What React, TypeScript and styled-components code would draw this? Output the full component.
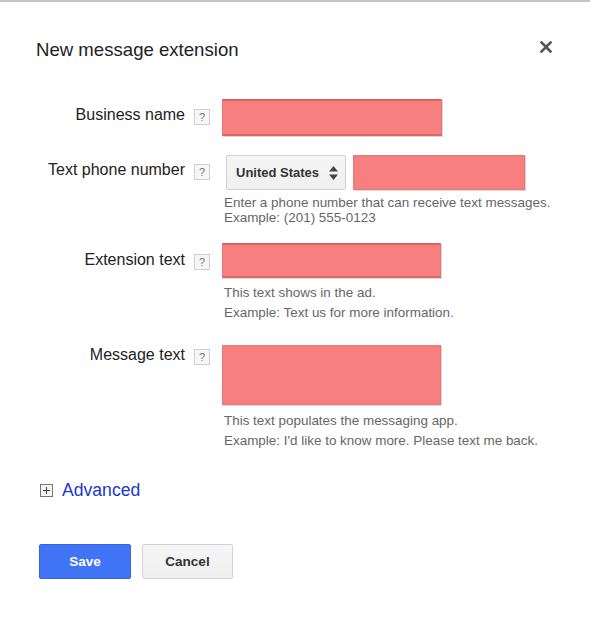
import React from "react";
import styled, { createGlobalStyle } from "styled-components";

const GlobalStyle = createGlobalStyle`
  html, body { margin: 0; padding: 0; background: #fff; }
  body { font-family: "Liberation Sans", Arial, sans-serif; color: #222; }
`;

const Dialog = styled.div`
  width: 590px;
  height: 617px;
  box-sizing: border-box;
  border-top: 2px solid #c4c4c4;
  background: #fff;
`;

const Header = styled.div`
  display: flex;
  justify-content: space-between;
  align-items: center;
  padding: 37px 37px 0 36px;
  height: 22px;
`;

const Title = styled.h1`
  margin: 0;
  font-size: 18.6px;
  font-weight: normal;
  line-height: 22px;
  color: #222;
`;

const CloseButton = styled.button`
  border: 0;
  background: none;
  padding: 0;
  width: 14px;
  height: 14px;
  display: flex;
  align-items: center;
  justify-content: center;
  cursor: pointer;
  margin-top: -6px;
`;

const Form = styled.div`
  margin-top: 38px;
  display: flex;
  flex-direction: column;
`;

const Row = styled.div<{ $gap: number }>`
  display: flex;
  align-items: flex-start;
  margin-top: ${(p) => p.$gap}px;
`;

const LabelCell = styled.div<{ $offset: number }>`
  flex: none;
  width: 222px;
  display: flex;
  align-items: flex-start;
  justify-content: flex-end;
  padding-top: ${(p) => p.$offset}px;
  padding-right: 12px;
  box-sizing: border-box;
`;

const Label = styled.label`
  font-size: 16px;
  line-height: 18px;
  color: #222;
  white-space: nowrap;
`;

const Help = styled.span`
  margin-left: 9px;
  margin-top: 3px;
  width: 14px;
  height: 14px;
  border: 1px solid #cfcfcf;
  background: #f7f7f7;
  color: #777;
  font-size: 11px;
  line-height: 14px;
  text-align: center;
  flex: none;
`;

const FieldCol = styled.div`
  display: flex;
  flex-direction: column;
`;

const TextBox = styled.div<{ $w: number; $h: number; $edge?: boolean }>`
  width: ${(p) => p.$w}px;
  height: ${(p) => p.$h}px;
  box-sizing: border-box;
  background: #f77f7f;
  border: 1px solid #e97474;
  border-top: 2px solid ${(p) => (p.$edge ? "#dc6262" : "#ee7a7a")};
  border-bottom: 2px solid ${(p) => (p.$edge ? "#e06666" : "#f17a7a")};
  box-shadow: 1px 1px 0 #d8d8d8;
`;

const PhoneLine = styled.div`
  display: flex;
  gap: 7px;
  padding-left: 4px;
`;

const Select = styled.div`
  width: 120px;
  height: 35px;
  box-sizing: border-box;
  border: 1px solid #d0d0d0;
  border-radius: 2px;
  background: linear-gradient(#f5f5f5, #f0f0f0);
  display: flex;
  align-items: center;
  justify-content: space-between;
  padding: 0 6px 0 9px;
  font-size: 13px;
  font-weight: bold;
  color: #333;
`;

const HelpText = styled.div<{ $lh: number; $top: number }>`
  margin-top: ${(p) => p.$top}px;
  padding-left: 2px;
  font-size: 13.45px;
  line-height: ${(p) => p.$lh}px;
  color: #666;
  white-space: nowrap;
`;

const Advanced = styled.div`
  margin-top: 29px;
  padding-left: 40px;
  display: flex;
  align-items: center;
  gap: 9px;
  height: 20px;
`;

const PlusBox = styled.span`
  width: 11px;
  height: 11px;
  border: 1px solid #777;
  background: #f4f4f4;
  position: relative;
  flex: none;
  &::before, &::after {
    content: "";
    position: absolute;
    background: #444;
  }
  &::before { left: 2px; right: 2px; top: 5px; height: 1px; }
  &::after { top: 2px; bottom: 2px; left: 5px; width: 1px; }
`;

const Link = styled.a`
  font-size: 17.6px;
  color: #2036d0;
  text-decoration: none;
  line-height: 20px;
`;

const Buttons = styled.div`
  margin-top: 44px;
  padding-left: 39px;
  display: flex;
  gap: 11px;
`;

const Button = styled.button<{ $primary?: boolean }>`
  width: ${(p) => (p.$primary ? 92 : 91)}px;
  height: 35px;
  box-sizing: border-box;
  border-radius: 2px;
  font-family: "Liberation Sans", Arial, sans-serif;
  font-size: 13.5px;
  font-weight: bold;
  cursor: pointer;
  border: 1px solid ${(p) => (p.$primary ? "#3465e8" : "#d3d3d3")};
  background: ${(p) => (p.$primary ? "#4174f5" : "linear-gradient(#f6f6f6, #efefef)")};
  color: ${(p) => (p.$primary ? "#fff" : "#333")};
`;

const Arrows = () => (
  <svg width="11" height="16" viewBox="0 0 11 16">
    <path d="M5.5 1 L10 6.5 H1 Z" fill="#444" />
    <path d="M5.5 15 L10 9.5 H1 Z" fill="#444" />
  </svg>
);

const CloseIcon = () => (
  <svg width="12" height="12" viewBox="0 0 12 12">
    <path d="M1.5 1.5 L10.5 10.5 M10.5 1.5 L1.5 10.5" stroke="#555" strokeWidth="2.6" strokeLinecap="square" />
  </svg>
);

export default function App() {
  return (
    <>
      <GlobalStyle />
      <Dialog>
        <Header>
          <Title>New message extension</Title>
          <CloseButton aria-label="Close">
            <CloseIcon />
          </CloseButton>
        </Header>
        <Form>
          <Row $gap={0}>
            <LabelCell $offset={7}>
              <Label>Business name</Label>
              <Help>?</Help>
            </LabelCell>
            <FieldCol>
              <TextBox $w={220} $h={37} $edge />
            </FieldCol>
          </Row>
          <Row $gap={19}>
            <LabelCell $offset={6}>
              <Label>Text phone number</Label>
              <Help>?</Help>
            </LabelCell>
            <FieldCol>
              <PhoneLine>
                <Select>
                  <span>United States</span>
                  <Arrows />
                </Select>
                <TextBox $w={172} $h={35} />
              </PhoneLine>
              <HelpText $lh={15} $top={5}>
                Enter a phone number that can receive text messages.
                <br />
                Example: (201) 555-0123
              </HelpText>
            </FieldCol>
          </Row>
          <Row $gap={18}>
            <LabelCell $offset={8}>
              <Label>Extension text</Label>
              <Help>?</Help>
            </LabelCell>
            <FieldCol>
              <TextBox $w={219} $h={35} $edge />
              <HelpText $lh={20} $top={5}>
                This text shows in the ad.
                <br />
                Example: Text us for more information.
              </HelpText>
            </FieldCol>
          </Row>
          <Row $gap={22}>
            <LabelCell $offset={1}>
              <Label>Message text</Label>
              <Help>?</Help>
            </LabelCell>
            <FieldCol>
              <TextBox $w={219} $h={60} />
              <HelpText $lh={20} $top={6}>
                This text populates the messaging app.
                <br />
                Example: I'd like to know more. Please text me back.
              </HelpText>
            </FieldCol>
          </Row>
        </Form>
        <Advanced>
          <PlusBox />
          <Link href="#">Advanced</Link>
        </Advanced>
        <Buttons>
          <Button $primary>Save</Button>
          <Button>Cancel</Button>
        </Buttons>
      </Dialog>
    </>
  );
}
